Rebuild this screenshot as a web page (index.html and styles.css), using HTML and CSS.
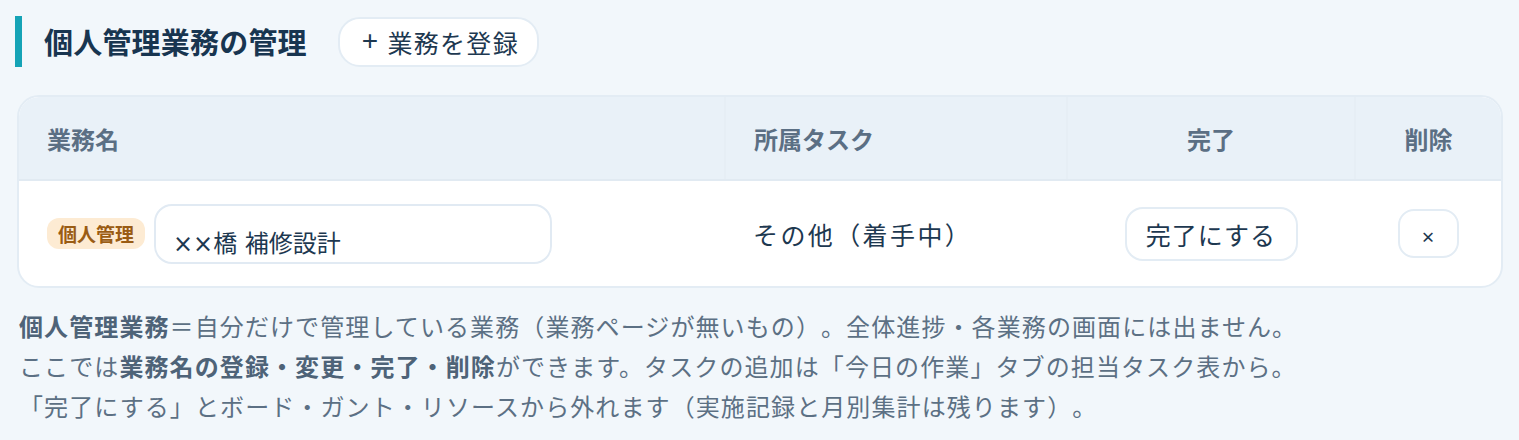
FILE: index.html
```html
<!DOCTYPE html>
<html lang="ja">
<head>
<meta charset="utf-8">
<title>個人管理業務の管理</title>
<link rel="stylesheet" href="styles.css">
</head>
<body>
<main class="page">
  <div class="head-row">
    <h2 class="title">個人管理業務の管理</h2>
    <button class="btn btn-add" type="button"><span class="plus">+</span>業務を登録</button>
  </div>

  <div class="card">
    <table class="tbl">
      <colgroup>
        <col class="c-name">
        <col class="c-task">
        <col class="c-done">
        <col class="c-del">
      </colgroup>
      <thead>
        <tr>
          <th class="th-left">業務名</th>
          <th class="th-left">所属タスク</th>
          <th class="th-center">完了</th>
          <th class="th-center">削除</th>
        </tr>
      </thead>
      <tbody>
        <tr>
          <td>
            <div class="name-cell">
              <span class="badge">個人管理</span>
              <input class="name-input" type="text" value="××橋 補修設計">
            </div>
          </td>
          <td class="task">その他（着手中）</td>
          <td class="center"><button class="btn btn-done" type="button">完了にする</button></td>
          <td class="center"><button class="btn btn-del" type="button">×</button></td>
        </tr>
      </tbody>
    </table>
  </div>

  <div class="note">
    <p><b>個人管理業務</b>＝自分だけで管理している業務（業務ページが無いもの）。全体進捗・各業務の画面には出ません。</p>
    <p>ここでは<b>業務名の登録・変更・完了・削除</b>ができます。タスクの追加は「今日の作業」タブの担当タスク表から。</p>
    <p>「完了にする」とボード・ガント・リソースから外れます（実施記録と月別集計は残ります）。</p>
  </div>
</main>
</body>
</html>
```

FILE: styles.css
```css
* { box-sizing: border-box; }

html, body {
  margin: 0;
  padding: 0;
  background: #f2f7fb;
}

body {
  font-family: "Noto Sans CJK JP", "Noto Sans", sans-serif;
  color: #1d3850;
  text-spacing-trim: space-all;
}

.page {
  padding: 16px 16px 0 17px;
}

.head-row {
  display: flex;
  align-items: center;
  gap: 31px;
  margin-left: -2px;
  height: 51px;
}

.title {
  margin: 0;
  border-left: 7px solid #15a3b6;
  padding-left: 22px;
  height: 51px;
  line-height: 51px;
  font-size: 29px;
  font-weight: 700;
  color: #183550;
  letter-spacing: 0.2px;
}

.btn {
  font-family: inherit;
  background: #ffffff;
  border: 2px solid #e3ecf4;
  color: #1d3850;
  cursor: pointer;
}

.btn-add {
  height: 50px;
  width: 201px;
  border-radius: 22px;
  font-size: 25px;
  letter-spacing: 1.3px;
  padding: 0 0 0 22px;
  display: flex;
  align-items: center;
  margin-top: 1px;
}

.plus {
  font-family: "Liberation Sans", "Noto Sans", sans-serif;
  font-size: 28px;
  font-weight: 400;
  margin-right: 8px;
  margin-top: -3px;
}

.card {
  margin-top: 28px;
  background: #ffffff;
  border: 2px solid #e3ecf4;
  border-radius: 22px;
  overflow: hidden;
}

.tbl {
  width: 100%;
  border-collapse: collapse;
  table-layout: fixed;
}

.c-name { width: 706px; }
.c-task { width: 342px; }
.c-done { width: 288px; }
.c-del { width: 146px; }

.tbl th {
  background: #e9f1f8;
  height: 83px;
  font-size: 24px;
  font-weight: 700;
  color: #5b6f84;
  border-bottom: 2px solid #e1eaf2;
  border-left: 2px solid #e6eef5;
  padding: 0 28px;
}

.tbl th:first-child { border-left: none; }

.th-left { text-align: left; }
.th-center { text-align: center; }

.tbl td {
  height: 106px;
  padding: 0 28px;
  font-size: 25px;
  color: #1d3850;
}

.tbl td.center {
  text-align: center;
  padding: 0;
}

.name-cell {
  display: flex;
  align-items: center;
  gap: 9px;
}

.badge {
  display: inline-block;
  background: #fdebd3;
  color: #9a5c14;
  font-size: 19px;
  font-weight: 700;
  border-radius: 12px;
  width: 98px;
  height: 31px;
  line-height: 31px;
  text-align: center;
}

.name-input {
  width: 398px;
  height: 60px;
  border: 2px solid #e1eaf3;
  border-radius: 18px;
  font-family: "DejaVu Sans", "Noto Sans CJK JP", sans-serif;
  font-size: 24px;
  color: #1d3850;
  padding: 16px 17px 0;
  background: #ffffff;
  outline: none;
}

.task {
  letter-spacing: 2.4px;
}

.btn-done {
  height: 54px;
  width: 173px;
  border-radius: 18px;
  font-size: 25px;
  letter-spacing: 1px;
  padding: 0;
}

.btn-del {
  height: 49px;
  width: 61px;
  border-radius: 16px;
  font-family: "Noto Sans", sans-serif;
  font-size: 22px;
  padding: 4px 0 0;
}

.note {
  margin-top: 18px;
  padding-left: 2px;
  font-size: 24px;
  line-height: 40px;
  letter-spacing: 1.1px;
  color: #5c7084;
}

.note p {
  margin: 0;
}

.note b {
  font-weight: 700;
  color: #4e6378;
}
```
